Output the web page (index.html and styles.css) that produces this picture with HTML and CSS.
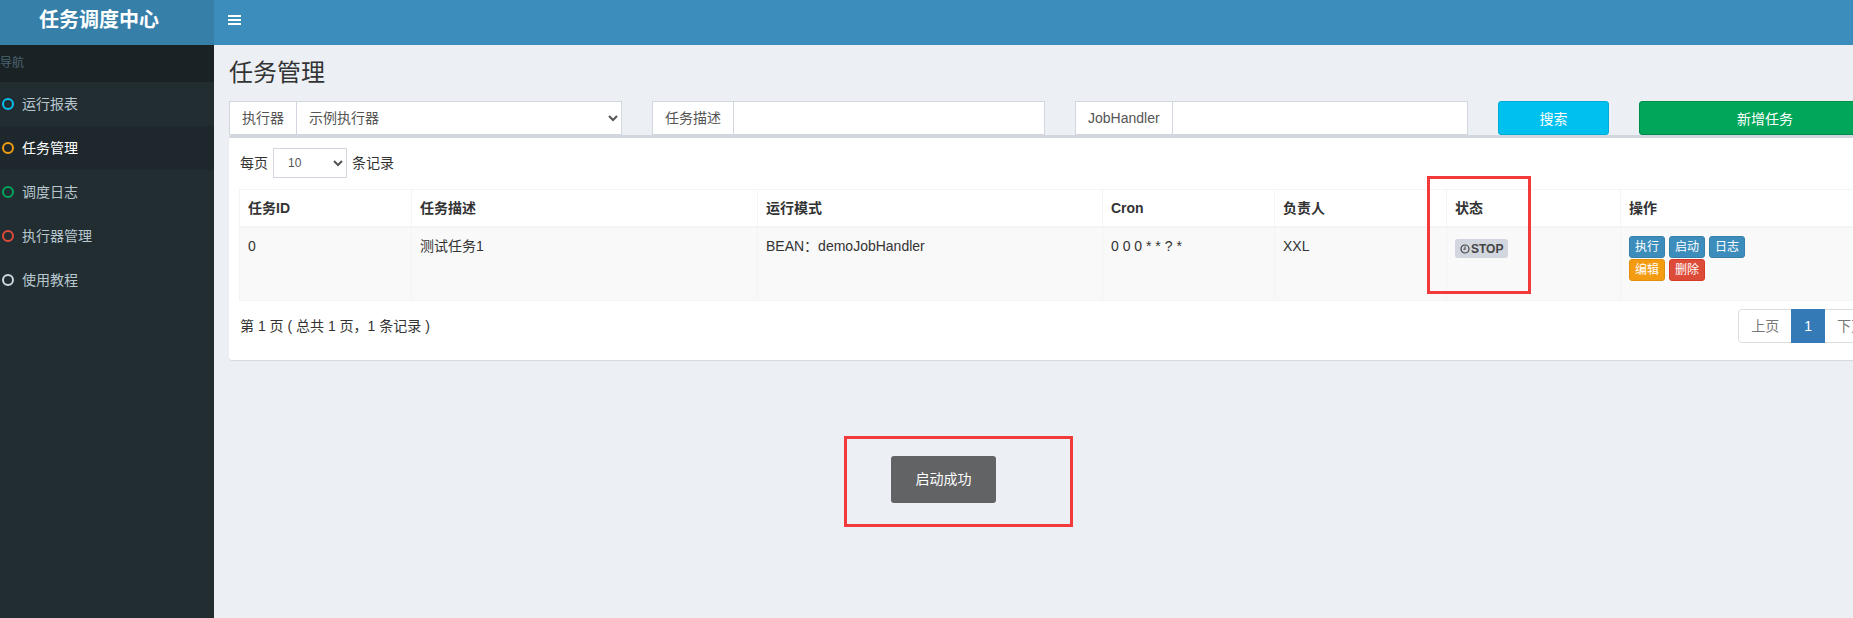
FILE: index.html
```html
<!DOCTYPE html>
<html lang="zh-CN">
<head>
<meta charset="utf-8">
<title>任务管理</title>
<link rel="stylesheet" href="styles.css">
</head>
<body>
<div class="app">
  <header class="main-header">
    <div class="logo">任务调度中心</div>
    <nav class="navbar">
      <span class="toggle"><i></i><i></i><i></i></span>
    </nav>
  </header>
  <div class="body-row">
    <aside class="sidebar">
      <div class="nav-header">导航</div>
      <ul class="menu">
        <li><span class="dot aqua"></span>运行报表</li>
        <li class="active"><span class="dot orange"></span>任务管理</li>
        <li><span class="dot green"></span>调度日志</li>
        <li><span class="dot red"></span>执行器管理</li>
        <li><span class="dot white"></span>使用教程</li>
      </ul>
    </aside>
    <main class="content-wrapper">
      <div class="content-header"><h1>任务管理</h1></div>
      <section class="content">
        <div class="row">
          <div class="col col-3">
            <div class="input-group">
              <span class="addon">执行器</span>
              <select class="form-control"><option>示例执行器</option></select>
            </div>
          </div>
          <div class="col col-3">
            <div class="input-group">
              <span class="addon">任务描述</span>
              <input class="form-control" type="text">
            </div>
          </div>
          <div class="col col-3">
            <div class="input-group">
              <span class="addon">JobHandler</span>
              <input class="form-control" type="text">
            </div>
          </div>
          <div class="col col-1"><button class="btn btn-info">搜索</button></div>
          <div class="col col-2"><button class="btn btn-success">新增任务</button></div>
        </div>

        <div class="box">
          <div class="box-body">
            <div class="length">每页 <select class="len-select"><option>10</option></select> 条记录</div>
            <table class="table">
              <thead>
                <tr>
                  <th class="c1">任务ID</th>
                  <th class="c2">任务描述</th>
                  <th class="c3">运行模式</th>
                  <th class="c4">Cron</th>
                  <th class="c5">负责人</th>
                  <th class="c6">状态</th>
                  <th class="c7">操作</th>
                </tr>
              </thead>
              <tbody>
                <tr>
                  <td>0</td>
                  <td>测试任务1</td>
                  <td>BEAN：demoJobHandler</td>
                  <td>0 0 0 * * ? *</td>
                  <td>XXL</td>
                  <td><span class="label"><svg class="clock" viewBox="0 0 10 10" width="10" height="10"><circle cx="5" cy="5" r="4" fill="none" stroke="#444" stroke-width="1.2"/><path d="M5 2.6V5.3H3.4" fill="none" stroke="#444" stroke-width="1.1"/></svg>STOP</span></td>
                  <td>
                    <div class="actions">
                      <div class="btn-line">
                        <span class="btn-xs primary">执行</span>
                        <span class="btn-xs primary">启动</span>
                        <span class="btn-xs primary">日志</span>
                      </div>
                      <div class="btn-line">
                        <span class="btn-xs warning">编辑</span>
                        <span class="btn-xs danger">删除</span>
                      </div>
                    </div>
                  </td>
                </tr>
              </tbody>
            </table>
            <div class="table-foot">
              <div class="info">第 1 页 ( 总共 1 页，1 条记录 )</div>
              <ul class="pagination">
                <li class="disabled">上页</li>
                <li class="current">1</li>
                <li class="disabled">下页</li>
              </ul>
            </div>
          </div>
        </div>
      </section>
    </main>
  </div>

  <div class="toast">启动成功</div>
  <div class="mark mark-status"></div>
  <div class="mark mark-toast"></div>
</div>
</body>
</html>
```

FILE: styles.css
```css
* { box-sizing: border-box; }

html, body {
  margin: 0;
  padding: 0;
  overflow: hidden;
}

body {
  font-family: "Liberation Sans", "Noto Sans CJK SC", sans-serif;
  font-size: 14px;
  line-height: 20px;
  color: #333;
  background: #ecf0f5;
}

.app {
  position: relative;
  width: 1906px;
  min-height: 618px;
  display: flex;
  flex-direction: column;
}

/* header */
.main-header {
  display: flex;
  height: 45px;
}

.logo {
  width: 214px;
  flex: none;
  background: #367fa9;
  color: #fff;
  font-size: 20px;
  font-weight: bold;
  line-height: 40px;
  text-align: center;
  padding-right: 16px;
}

.navbar {
  flex: 1;
  background: #3c8dbc;
  padding: 15px 0 0 14px;
}

.toggle {
  display: flex;
  flex-direction: column;
  gap: 2px;
  width: 13px;
}

.toggle i {
  display: block;
  height: 2px;
  background: #fff;
}

/* body */
.body-row {
  flex: 1;
  display: flex;
}

.sidebar {
  width: 214px;
  flex: none;
  background: #222d32;
}

.nav-header {
  background: #1a2226;
  color: #4b646f;
  font-size: 12px;
  line-height: 17px;
  padding: 10px 0;
}

.menu {
  list-style: none;
  margin: 0;
  padding: 0;
}

.menu li {
  display: flex;
  align-items: center;
  height: 44px;
  padding-left: 2px;
  color: #b8c7ce;
  font-size: 14px;
}

.menu li.active {
  background: #1e282c;
  color: #fff;
}

.dot {
  width: 12px;
  height: 12px;
  border-radius: 50%;
  border: 2px solid;
  margin-right: 8px;
}

.dot.aqua { border-color: #00c0ef; }
.dot.orange { border-color: #f39c12; }
.dot.green { border-color: #00a65a; }
.dot.red { border-color: #dd4b39; }
.dot.white { border-color: #d2d6de; }

/* content */
.content-wrapper {
  flex: 1;
  background: #ecf0f5;
}

.content-header {
  padding: 15px 15px 0;
}

.content-header h1 {
  margin: 0;
  font-size: 24px;
  font-weight: normal;
  line-height: 26px;
  color: #333;
}

.content {
  padding: 15px;
}

.row {
  display: flex;
  margin: 0 -15px;
}

.col {
  padding: 0 15px;
}

.col-3 { width: 25%; }
.col-1 { width: 8.3333%; }
.col-2 { width: 16.6667%; }

.input-group {
  display: flex;
  height: 34px;
}

.addon {
  flex: none;
  padding: 6px 12px;
  border: 1px solid #d2d6de;
  border-right: 0;
  background: #fff;
  color: #555;
  font-size: 14px;
  line-height: 20px;
}

.form-control {
  flex: 1;
  min-width: 0;
  height: 34px;
  border: 1px solid #d2d6de;
  background: #fff;
  color: #555;
  font-family: inherit;
  font-size: 14px;
  padding: 6px 12px;
  border-radius: 0;
  outline: none;
}

select.form-control {
  padding: 6px 8px;
}

.btn {
  display: block;
  width: 100%;
  height: 34px;
  border: 1px solid;
  border-radius: 3px;
  color: #fff;
  font-family: inherit;
  font-size: 14px;
  cursor: pointer;
}

.btn-info {
  background: #00c0ef;
  border-color: #00acd6;
}

.btn-success {
  background: #00a65a;
  border-color: #008d4c;
}

/* box */
.box {
  background: #fff;
  border-top: 3px solid #d2d6de;
  border-radius: 3px;
  box-shadow: 0 1px 1px rgba(0, 0, 0, 0.1);
}

.box-body {
  padding: 10px 10px 15px;
}

.length {
  display: flex;
  align-items: center;
  gap: 5px;
  height: 30px;
  padding-left: 1px;
}

.len-select {
  width: 74px;
  height: 30px;
  border: 1px solid #d2d6de;
  background: #fff;
  font-family: inherit;
  font-size: 12px;
  color: #555;
  padding: 0 10px;
  border-radius: 0;
}

.table {
  width: 1642px;
  table-layout: fixed;
  border-collapse: collapse;
  margin: 11px 0 6px;
  border: 1px solid #f4f4f4;
}

.table th,
.table td {
  text-align: left;
  vertical-align: top;
  padding: 8px;
  border: 1px solid #f4f4f4;
  line-height: 20px;
}

.table th {
  font-weight: bold;
  border-bottom-width: 2px;
}

.table tbody tr {
  background: #f9f9f9;
}

.table td {
  height: 73px;
}

.c1 { width: 172px; }
.c2 { width: 346px; }
.c3 { width: 345px; }
.c4 { width: 172px; }
.c5 { width: 172px; }
.c6 { width: 174px; }

.label {
  display: inline-flex;
  align-items: center;
  gap: 1px;
  height: 19px;
  margin-top: 3px;
  padding: 0 5px 0 5px;
  border-radius: 3px;
  background: #d2d6de;
  color: #444;
  font-size: 12px;
  font-weight: bold;
}

.actions {
  display: flex;
  flex-direction: column;
  gap: 1px;
}

.btn-line {
  display: flex;
  gap: 4px;
}

.btn-xs {
  display: inline-block;
  padding: 0 5px;
  height: 22px;
  line-height: 20px;
  font-size: 12px;
  color: #fff;
  border: 1px solid;
  border-radius: 3px;
}

.btn-xs.primary { background: #3c8dbc; border-color: #367fa9; }
.btn-xs.warning { background: #f39c12; border-color: #e08e0b; }
.btn-xs.danger { background: #dd4b39; border-color: #d73925; }

.table-foot {
  display: flex;
  align-items: center;
  justify-content: space-between;
  padding-right: 3px;
}

.info {
  padding-left: 1px;
}

.pagination {
  display: flex;
  list-style: none;
  margin: 2px 0;
  padding: 0;
}

.pagination li {
  padding: 6px 12px;
  line-height: 20px;
  border: 1px solid #ddd;
  margin-left: -1px;
  color: #777;
  background: #fff;
}

.pagination li:first-child {
  margin-left: 0;
  border-radius: 4px 0 0 4px;
}

.pagination li:last-child {
  border-radius: 0 4px 4px 0;
}

.pagination li.current {
  background: #337ab7;
  border-color: #337ab7;
  color: #fff;
  position: relative;
}

/* overlays */
.toast {
  position: absolute;
  left: 891px;
  top: 456px;
  width: 105px;
  height: 47px;
  border-radius: 3px;
  background: #626365;
  color: #fff;
  font-size: 14px;
  line-height: 47px;
  text-align: center;
}

.mark {
  position: absolute;
  border: 3px solid #f23a3a;
}

.mark-status {
  left: 1427px;
  top: 176px;
  width: 104px;
  height: 118px;
}

.mark-toast {
  left: 844px;
  top: 436px;
  width: 229px;
  height: 91px;
}
```
